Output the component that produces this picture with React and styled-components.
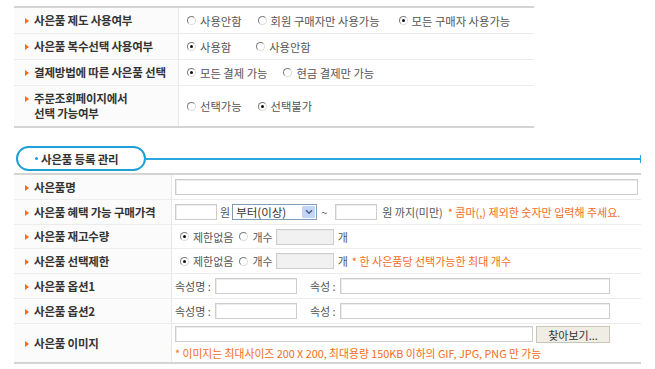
import styled, { createGlobalStyle } from 'styled-components'

const GlobalStyle = createGlobalStyle`
  body {
    margin: 0;
    background: #fff;
    font-family: "Noto Sans CJK KR", "Noto Sans", sans-serif;
  }
`

const Page = styled.div`
  padding: 6px 0 0 14px;
  width: 627px;
`

const Table = styled.div`
  width: ${p => p.$width}px;
  border-top: 2px solid #d4d4d4;
  border-bottom: 2px solid #d4d4d4;
`

const Row = styled.div`
  display: grid;
  grid-template-columns: ${p => p.$label}px 1fr;
  height: ${p => p.$h}px;
  box-sizing: border-box;
  border-bottom: 1px solid #ececec;

  &:last-child {
    border-bottom: none;
  }
`

const Label = styled.div`
  display: flex;
  align-items: center;
  padding-left: 11px;
  background: #fbfbfb;
  border-right: 1px solid #e7e7e7;
`

const LabelInner = styled.div`
  display: flex;
  align-items: flex-start;
`

const Bullet = styled.span`
  width: 0;
  height: 0;
  margin: 5px 5px 0 0;
  border-left: 4px solid #f36c21;
  border-top: 3px solid transparent;
  border-bottom: 3px solid transparent;
`

const LabelText = styled.span`
  font-size: 11.5px;
  font-weight: bold;
  color: #333;
  line-height: 15px;
  letter-spacing: -0.2px;
`

const Value = styled.div`
  display: flex;
  flex-direction: ${p => (p.$stack ? 'column' : 'row')};
  align-items: ${p => (p.$stack ? 'flex-start' : 'center')};
  justify-content: ${p => (p.$stack ? 'center' : 'flex-start')};
  gap: ${p => (p.$stack ? '2px' : '0')};
  padding-left: 3px;
  font-size: ${p => p.$size ?? 11}px;
  color: #555;
  white-space: nowrap;
`

const Line = styled.div`
  display: flex;
  align-items: center;
`

const Option = styled.label`
  display: flex;
  align-items: center;
  margin-right: ${p => p.$gap ?? 11}px;
`

const Radio = styled.span`
  position: relative;
  width: 9px;
  height: 9px;
  margin: 0 4px 0 5px;
  border-radius: 50%;
  box-sizing: border-box;
  border: 1px solid;
  border-color: #7c7c7c #dcdcdc #dcdcdc #7c7c7c;
  background: #fff;

  &::after {
    content: '';
    display: ${p => (p.$on ? 'block' : 'none')};
    position: absolute;
    left: 2px;
    top: 2px;
    width: 3px;
    height: 3px;
    border-radius: 50%;
    background: #111;
  }
`

const Text = styled.span`
  margin: 0 ${p => p.$mr ?? 0}px 0 ${p => p.$ml ?? 0}px;
`

const Note = styled.span`
  color: #f36c21;
  margin-left: ${p => p.$ml ?? 0}px;
  font-size: ${p => p.$size ?? 11}px;
`

const Field = styled.input`
  width: ${p => p.$w}px;
  height: 16px;
  box-sizing: border-box;
  margin: 0;
  padding: 0 3px;
  border: 1px solid #cdcdcd;
  box-shadow: inset 1px 1px 0 #ececec;
  background: ${p => (p.disabled ? '#f1f1f1' : '#fff')};
  font: inherit;
  outline: none;
`

const Select = styled.div`
  display: flex;
  align-items: center;
  width: 85px;
  height: 16px;
  box-sizing: border-box;
  margin: 0 4px 0 2px;
  border: 1px solid #7f9db9;
  background: #fff;
  color: #333;
  font-size: 11.5px;

  span {
    flex: 1;
    padding-left: 3px;
  }
`

const Drop = styled.div`
  display: flex;
  align-items: center;
  justify-content: center;
  width: 13px;
  height: 12px;
  margin-right: 1px;
  background: #c3d4f9;
  border-radius: 1px;
`

const Browse = styled.button`
  width: 74px;
  height: 17px;
  margin-left: 3px;
  padding: 0;
  border: 1px solid #c9c6b8;
  background: #efede4;
  color: #333;
  font: inherit;
  font-size: 11px;
`

const Header = styled.div`
  display: flex;
  align-items: center;
  margin: 18px 0 2px 2px;
`

const Pill = styled.div`
  display: flex;
  align-items: center;
  width: 130px;
  height: 25px;
  box-sizing: border-box;
  padding-left: 17px;
  border: 2px solid #1e9fd8;
  border-radius: 13px;
  font-size: 11.5px;
  font-weight: bold;
  color: #333;
  letter-spacing: -0.2px;

  &::before {
    content: '';
    width: 3px;
    height: 3px;
    margin-right: 3px;
    border-radius: 50%;
    background: #1e9fd8;
  }
`

const Rule = styled.div`
  position: relative;
  flex: 1;
  height: 2px;
  background: #2aa7de;

  &::after {
    content: '';
    position: absolute;
    right: 0;
    top: -3px;
    width: 1px;
    height: 8px;
    background: #2aa7de;
  }
`

function Cell({ children }) {
  return (
    <Label>
      <LabelInner>
        <Bullet />
        <LabelText>{children}</LabelText>
      </LabelInner>
    </Label>
  )
}

function Choice({ on, children, gap }) {
  return (
    <Option $gap={gap}>
      <Radio $on={on} />
      {children}
    </Option>
  )
}

export default function App() {
  return (
    <Page>
      <GlobalStyle />
      <Table $width={520}>
        <Row $label={165} $h={26}>
          <Cell>사은품 제도 사용여부</Cell>
          <Value $size={11.3}>
            <Choice>사용안함</Choice>
            <Choice gap={14}>회원 구매자만 사용가능</Choice>
            <Choice on>모든 구매자 사용가능</Choice>
          </Value>
        </Row>
        <Row $label={165} $h={26}>
          <Cell>사은품 복수선택 사용여부</Cell>
          <Value $size={11.3}>
            <Choice on gap={20}>사용함</Choice>
            <Choice>사용안함</Choice>
          </Value>
        </Row>
        <Row $label={165} $h={26}>
          <Cell>결제방법에 따른 사은품 선택</Cell>
          <Value $size={11.3}>
            <Choice on>모든 결제 가능</Choice>
            <Choice>현금 결제만 가능</Choice>
          </Value>
        </Row>
        <Row $label={165} $h={40}>
          <Cell>
            주문조회페이지에서
            <br />
            선택 가능여부
          </Cell>
          <Value $size={11.3}>
            <Choice>선택가능</Choice>
            <Choice on>선택불가</Choice>
          </Value>
        </Row>
      </Table>

      <Header>
        <Pill>사은품 등록 관리</Pill>
        <Rule />
      </Header>

      <Table $width={627}>
        <Row $label={158} $h={25}>
          <Cell>사은품명</Cell>
          <Value>
            <Field $w={463} readOnly />
          </Value>
        </Row>
        <Row $label={158} $h={25}>
          <Cell>사은품 혜택 가능 구매가격</Cell>
          <Value>
            <Field $w={42} readOnly />
            <Text $ml={3}>원</Text>
            <Select>
              <span>부터(이상)</span>
              <Drop>
                <svg width="8" height="6" viewBox="0 0 8 6">
                  <path d="M1 1.2 L4 4.2 L7 1.2" fill="none" stroke="#4d6185" strokeWidth="1.6" />
                </svg>
              </Drop>
            </Select>
            <Text $mr={8}>~</Text>
            <Field $w={42} readOnly />
            <Text $ml={5}>원 까지(미만)</Text>
            <Note $ml={5}>* 콤마(,) 제외한 숫자만 입력해 주세요.</Note>
          </Value>
        </Row>
        <Row $label={158} $h={24}>
          <Cell>사은품 재고수량</Cell>
          <Value>
            <Choice on gap={1}>제한없음</Choice>
            <Choice gap={3}>개수</Choice>
            <Field $w={58} disabled />
            <Text $ml={4}>개</Text>
          </Value>
        </Row>
        <Row $label={158} $h={25}>
          <Cell>사은품 선택제한</Cell>
          <Value>
            <Choice on gap={1}>제한없음</Choice>
            <Choice gap={3}>개수</Choice>
            <Field $w={58} disabled />
            <Text $ml={4}>개</Text>
            <Note $ml={4}>* 한 사은품당 선택가능한 최대 개수</Note>
          </Value>
        </Row>
        <Row $label={158} $h={25}>
          <Cell>사은품 옵션1</Cell>
          <Value>
            <Text $mr={4}>속성명 :</Text>
            <Field $w={82} readOnly />
            <Text $ml={13} $mr={4}>속성 :</Text>
            <Field $w={270} readOnly />
          </Value>
        </Row>
        <Row $label={158} $h={25}>
          <Cell>사은품 옵션2</Cell>
          <Value>
            <Text $mr={4}>속성명 :</Text>
            <Field $w={82} readOnly />
            <Text $ml={13} $mr={4}>속성 :</Text>
            <Field $w={270} readOnly />
          </Value>
        </Row>
        <Row $label={158} $h={38}>
          <Cell>사은품 이미지</Cell>
          <Value $stack>
            <Line>
              <Field $w={358} readOnly />
              <Browse type="button">찾아보기...</Browse>
            </Line>
            <Note $size={10.8}>* 이미지는 최대사이즈 200 X 200, 최대용량 150KB 이하의 GIF, JPG, PNG 만 가능</Note>
          </Value>
        </Row>
      </Table>
    </Page>
  )
}
